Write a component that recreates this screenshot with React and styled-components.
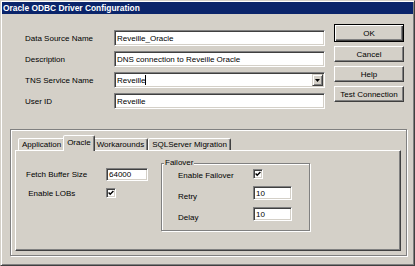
import React from "react";
import styled, { createGlobalStyle } from "styled-components";

const face = "#d4d0c8";
const hi = "#ffffff";
const sh = "#808080";
const dk = "#404040";

const GlobalStyle = createGlobalStyle`
  html, body { margin: 0; padding: 0; background: ${face}; }
  body { font-family: "Liberation Sans", Arial, sans-serif; font-size: 8px; color: #000; }
  * { box-sizing: border-box; }
`;

const Window = styled.div`
  width: 415px;
  height: 266px;
  background: ${face};
  border: 1px solid;
  border-color: ${face} ${dk} ${dk} ${face};
  box-shadow: inset 1px 1px ${hi}, inset -1px -1px ${sh};
  padding: 1px;
  display: flex;
  flex-direction: column;
`;

const TitleBar = styled.div`
  height: 12px;
  background: #0a246a;
  color: #fff;
  font-weight: bold;
  font-size: 8.4px;
  line-height: 12px;
  padding-left: 1px;
  white-space: nowrap;
`;

const Top = styled.div`
  display: flex;
  align-items: flex-start;
`;

const Form = styled.div`
  display: grid;
  grid-template-columns: 89px 211px;
  grid-auto-rows: 16px;
  row-gap: 5px;
  align-items: center;
  margin: 16px 0 0 23px;
`;

const Label = styled.span`
  white-space: nowrap;
  font-size: 8px;
  padding-top: ${(p) => p.$drop || 0}px;
`;

const Field = styled.div`
  height: ${(p) => p.$h || 16}px;
  width: ${(p) => (p.$w ? `${p.$w}px` : "auto")};
  background: #fff;
  border: 1px solid;
  border-color: ${sh} ${hi} ${hi} ${sh};
  box-shadow: inset 1px 1px ${dk}, inset -1px -1px ${face};
  padding: 1px 1px 1px 2px;
  display: flex;
  align-items: center;
  white-space: nowrap;
  overflow: hidden;
`;

const FieldText = styled.span`
  flex: 1;
  display: flex;
  align-items: center;
`;

const Caret = styled.span`
  display: inline-block;
  width: 1px;
  height: 10px;
  background: #000;
`;

const DropButton = styled.span`
  width: 11px;
  height: 12px;
  background: ${face};
  border: 1px solid;
  border-color: ${face} ${dk} ${dk} ${face};
  box-shadow: inset 1px 1px ${hi}, inset -1px -1px ${sh};
  display: flex;
  align-items: center;
  justify-content: center;
`;

const ButtonColumn = styled.div`
  display: flex;
  flex-direction: column;
  gap: 4px;
  margin: 10px 0 0 9px;
  width: 70px;
`;

const Button = styled.button`
  font-family: inherit;
  font-size: 8px;
  color: #000;
  height: ${(p) => (p.$default ? 18 : 16)}px;
  background: ${face};
  border: 1px solid;
  border-color: ${(p) => (p.$default ? "#000" : `${hi} ${dk} ${dk} ${hi}`)};
  box-shadow: ${(p) =>
    p.$default
      ? `inset 1px 1px ${hi}, inset -1px -1px ${dk}, inset -2px -2px ${sh}`
      : `inset -1px -1px ${sh}`};
  padding: 0;
  white-space: nowrap;
`;

const Etched = styled.div`
  margin: 20px 6px 0 8px;
  height: 127px;
  border: 1px solid ${sh};
  box-shadow: inset 1px 1px ${hi}, 1px 1px ${hi};
  padding: 5px 5px 4px 4px;
  display: flex;
  flex-direction: column;
`;

const TabStrip = styled.div`
  display: flex;
  align-items: flex-end;
  height: 15px;
  padding-left: 3px;
  position: relative;
  z-index: 1;
`;

const Tab = styled.div`
  position: relative;
  background: ${face};
  border: 1px solid;
  border-bottom: none;
  border-color: ${hi} ${dk} transparent ${hi};
  border-radius: 2px 2px 0 0;
  box-shadow: inset -1px 0 ${sh};
  padding: ${(p) => (p.$active ? "1px 3px 0" : "0 3px")};
  height: ${(p) => (p.$active ? 16 : 12)}px;
  line-height: ${(p) => (p.$active ? 12 : 11)}px;
  margin: ${(p) => (p.$active ? "0 -2px -1px" : "0")};
  z-index: ${(p) => (p.$active ? 2 : 1)};
  white-space: nowrap;
`;

const Panel = styled.div`
  flex: 1;
  border: 1px solid;
  border-color: ${hi} ${dk} ${dk} ${hi};
  box-shadow: inset -1px -1px ${sh};
  padding: 7px 0 0 10px;
  display: flex;
  align-items: flex-start;
  gap: 13px;
`;

const OptionGrid = styled.div`
  display: grid;
  grid-template-columns: ${(p) => p.$cols};
  grid-template-rows: ${(p) => p.$rows};
  row-gap: 7px;
  align-items: center;
  margin: ${(p) => p.$margin || 0};
`;

const GroupBox = styled.fieldset`
  margin: 0;
  width: 149px;
  padding: 1px 0 9px 2px;
  border: 1px solid ${sh};
  box-shadow: inset 1px 1px ${hi}, 1px 1px ${hi};
`;

const Legend = styled.legend`
  padding: 0 1px;
  line-height: 10px;
  font-size: 8px;
  background: ${face};
`;

const CheckBox = styled.span`
  width: 10px;
  height: 10px;
  background: #fff;
  border: 1px solid;
  border-color: ${sh} ${hi} ${hi} ${sh};
  box-shadow: inset 1px 1px ${dk}, inset -1px -1px ${face};
  display: flex;
  align-items: center;
  justify-content: center;
`;

const Check = () => (
  <CheckBox>
    <svg width="6" height="6" viewBox="0 0 6 6">
      <polyline points="0.6,2.6 2.2,4.3 5.4,1" fill="none" stroke="#000" strokeWidth="1.4" />
    </svg>
  </CheckBox>
);

export default function App() {
  return (
    <>
      <GlobalStyle />
      <Window>
        <TitleBar>Oracle ODBC Driver Configuration</TitleBar>
        <Top>
          <Form>
            <Label>Data Source Name</Label>
            <Field><FieldText>Reveille_Oracle</FieldText></Field>
            <Label>Description</Label>
            <Field><FieldText>DNS connection to Reveille Oracle</FieldText></Field>
            <Label>TNS Service Name</Label>
            <Field>
              <FieldText>Reveille<Caret /></FieldText>
              <DropButton>
                <svg width="5" height="3" viewBox="0 0 5 3">
                  <polygon points="0,0 5,0 2.5,3" fill="#000" />
                </svg>
              </DropButton>
            </Field>
            <Label>User ID</Label>
            <Field><FieldText>Reveille</FieldText></Field>
          </Form>
          <ButtonColumn>
            <Button $default>OK</Button>
            <Button>Cancel</Button>
            <Button>Help</Button>
            <Button>Test Connection</Button>
          </ButtonColumn>
        </Top>
        <Etched>
          <TabStrip>
            <Tab>Application</Tab>
            <Tab $active>Oracle</Tab>
            <Tab>Workarounds</Tab>
            <Tab>SQLServer Migration</Tab>
          </TabStrip>
          <Panel>
            <OptionGrid $cols="80px 42px" $rows="13px 10px" $margin="10px 0 0 0">
              <Label>Fetch Buffer Size</Label>
              <Field $h={13} $w={42}><FieldText>64000</FieldText></Field>
              <Label $drop={1}>&nbsp;Enable LOBs</Label>
              <Check />
            </OptionGrid>
            <GroupBox>
              <Legend>Failover</Legend>
              <OptionGrid $cols="75px 39px" $rows="10px 14px 14px" $margin="0 0 0 14px">
                <Label $drop={2}>Enable Failover</Label>
                <Check />
                <Label $drop={6}>Retry</Label>
                <Field $h={14} $w={39}><FieldText>10</FieldText></Field>
                <Label $drop={6}>Delay</Label>
                <Field $h={14} $w={39}><FieldText>10</FieldText></Field>
              </OptionGrid>
            </GroupBox>
          </Panel>
        </Etched>
      </Window>
    </>
  );
}
